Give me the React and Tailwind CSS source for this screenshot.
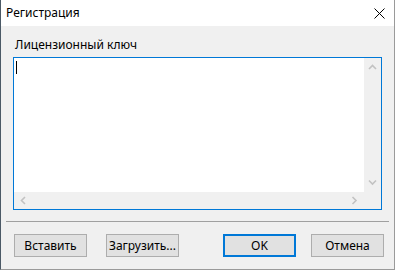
// Registration dialog (Windows 10 style)
const Chevron = ({ dir }) => {
  // small grey scrollbar arrow
  const paths = {
    up: 'M1 5 L4.5 1.5 L8 5',
    down: 'M1 1.5 L4.5 5 L8 1.5',
    left: 'M5 1 L1.5 4.5 L5 8',
    right: 'M1.5 1 L5 4.5 L1.5 8',
  };
  const vertical = dir === 'up' || dir === 'down';
  return (
    <svg width={vertical ? 9 : 7} height={vertical ? 7 : 9} viewBox={vertical ? '0 0 9 7' : '0 0 7 9'}>
      <path d={paths[dir]} fill="none" stroke="#c2c2c2" strokeWidth="1.6" />
    </svg>
  );
};

const Button = ({ children, primary }) => (
  <button
    className={`w-[73px] h-[23px] bg-[#e1e1e1] text-[12px] text-black flex items-center justify-center ${
      primary ? 'border-2 border-[#0078d7]' : 'border border-[#adadad]'
    }`}
  >
    {children}
  </button>
);

export default function App() {
  return (
    <div
      className="w-[395px] h-[270px] flex flex-col bg-[#f0f0f0] border-l border-l-[#4b5966] border-r border-r-[#9a9a9a] border-b border-b-[#9a9a9a] overflow-hidden"
      style={{ fontFamily: '"Noto Sans", "Liberation Sans", sans-serif' }}
    >
      {/* title bar */}
      <div className="h-[26px] bg-white flex items-center justify-between pl-[5px] pr-[9px] shrink-0">
        <span className="text-[12px] text-black">Регистрация</span>
        <svg width="11" height="11" viewBox="0 0 11 11">
          <path d="M0.5 0.5 L10.5 10.5 M10.5 0.5 L0.5 10.5" stroke="#000" strokeWidth="1" />
        </svg>
      </div>

      {/* body */}
      <div className="flex-1 flex flex-col">
        <div className="pl-[14px] mt-[11px] h-[16px] leading-[16px] text-[12px] text-black">Лицензионный ключ</div>

        {/* text area */}
        <div className="ml-[12px] mt-[4px] w-[369px] h-[153px] border border-[#0078d7] bg-white grid grid-cols-[1fr_17px] grid-rows-[1fr_17px]">
          <div className="relative">
            <div className="absolute left-[2px] top-[3px] w-[1px] h-[13px] bg-black" />
          </div>
          <div className="bg-[#f0f0f0] flex flex-col items-center justify-between py-[6px]">
            <Chevron dir="up" />
            <Chevron dir="down" />
          </div>
          <div className="bg-[#f0f0f0] flex items-center justify-between px-[6px]">
            <Chevron dir="left" />
            <Chevron dir="right" />
          </div>
          <div className="bg-[#f0f0f0]" />
        </div>

        {/* separator */}
        <div className="mt-[11px] ml-[5px] w-[383px] h-[1px] bg-[#a0a0a0]" />

        {/* buttons */}
        <div className="mt-[12px] flex justify-between pl-[13px] pr-[10px]">
          <div className="flex gap-[19px]">
            <Button>Вставить</Button>
            <Button>Загрузить...</Button>
          </div>
          <div className="flex gap-[15px]">
            <Button primary>OK</Button>
            <Button>Отмена</Button>
          </div>
        </div>
      </div>
    </div>
  );
}
